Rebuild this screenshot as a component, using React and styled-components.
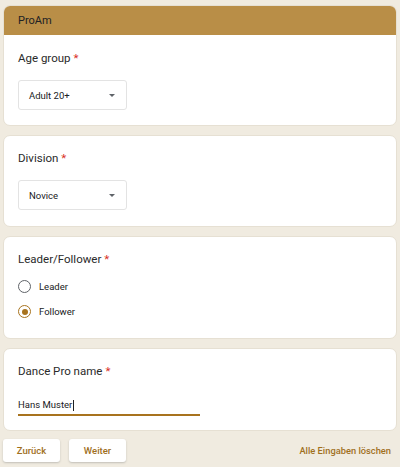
import React from "react";
import styled, { createGlobalStyle } from "styled-components";

const GlobalStyle = createGlobalStyle`
  html, body {
    margin: 0;
    padding: 0;
    background: #f0ebe0;
  }
  body {
    font-family: Roboto, "Liberation Sans", Arial, sans-serif;
    color: #202124;
  }
`;

const Page = styled.div`
  width: 400px;
  height: 467px;
  box-sizing: border-box;
  padding: 5px 3px 0 3px;
  display: flex;
  flex-direction: column;
  gap: 9px;
  overflow: hidden;
`;

const Card = styled.div`
  background: #fff;
  border-radius: 7px;
  border: 1px solid #e6e0d3;
  box-sizing: border-box;
  height: ${({ $h }) => $h}px;
  flex: none;
  overflow: hidden;
  display: flex;
  flex-direction: column;
`;

const Header = styled.div`
  background: #b98e47;
  height: 29px;
  flex: none;
  display: flex;
  align-items: center;
  padding-left: 14px;
  font-size: 11px;
  color: #202124;
`;

const Body = styled.div`
  padding: ${({ $top }) => $top}px 14px 0 14px;
  display: flex;
  flex-direction: column;
`;

const Label = styled.div`
  font-size: 11.5px;
  line-height: 14px;
  color: #2a2a2a;
  span {
    color: #d93025;
    margin-left: 3px;
  }
`;

const Select = styled.div`
  margin-top: 15px;
  width: 109px;
  height: 30px;
  box-sizing: border-box;
  border: 1px solid #e3e3e3;
  border-radius: 3px;
  display: flex;
  align-items: center;
  justify-content: space-between;
  padding: 0 11px 0 10px;
  font-size: 9.5px;
  color: #202124;
`;

const Arrow = styled.div`
  width: 0;
  height: 0;
  border-left: 3.5px solid transparent;
  border-right: 3.5px solid transparent;
  border-top: 3.5px solid #5f6368;
`;

const Options = styled.div`
  margin-top: 14px;
  display: flex;
  flex-direction: column;
  gap: 12px;
`;

const Option = styled.div`
  display: flex;
  align-items: center;
  gap: 8px;
  font-size: 9.5px;
  color: #202124;
  height: 13px;
`;

const Radio = styled.div`
  width: 13px;
  height: 13px;
  box-sizing: border-box;
  border-radius: 50%;
  border: 1.5px solid ${({ $on }) => ($on ? "#a8731e" : "#5f6368")};
  display: flex;
  align-items: center;
  justify-content: center;
  &::after {
    content: "";
    display: ${({ $on }) => ($on ? "block" : "none")};
    width: 6px;
    height: 6px;
    border-radius: 50%;
    background: #a8731e;
  }
`;

const Input = styled.div`
  margin-top: 21px;
  width: 182px;
  border-bottom: 2px solid #a8731e;
  font-size: 9.5px;
  line-height: 12px;
  padding-bottom: 3px;
  display: flex;
  align-items: center;
`;

const Caret = styled.span`
  display: inline-block;
  width: 1px;
  height: 11px;
  background: #202124;
  margin-left: 1px;
`;

const Footer = styled.div`
  display: flex;
  align-items: center;
  gap: 9px;
  margin-top: -1px;
`;

const Button = styled.div`
  width: 57px;
  height: 23px;
  background: #fff;
  border-radius: 3px;
  box-shadow: 0 1px 2px rgba(60, 64, 67, 0.25);
  display: flex;
  align-items: center;
  justify-content: center;
  font-size: 9.5px;
  font-weight: 500;
  color: #a0701e;
`;

const Clear = styled.div`
  margin-left: auto;
  margin-right: 6px;
  font-size: 9.3px;
  font-weight: 500;
  color: #a0701e;
`;

const Req = () => <span>*</span>;

export default function App() {
  return (
    <>
      <GlobalStyle />
      <Page>
        <Card $h={121}>
          <Header>ProAm</Header>
          <Body $top={16}>
            <Label>
              Age group<Req />
            </Label>
            <Select>
              Adult 20+
              <Arrow />
            </Select>
          </Body>
        </Card>
        <Card $h={92}>
          <Body $top={15}>
            <Label>
              Division<Req />
            </Label>
            <Select>
              Novice
              <Arrow />
            </Select>
          </Body>
        </Card>
        <Card $h={103}>
          <Body $top={15}>
            <Label>
              Leader/Follower<Req />
            </Label>
            <Options>
              <Option>
                <Radio />
                Leader
              </Option>
              <Option>
                <Radio $on />
                Follower
              </Option>
            </Options>
          </Body>
        </Card>
        <Card $h={83}>
          <Body $top={15}>
            <Label>
              Dance Pro name<Req />
            </Label>
            <Input>
              Hans Muster
              <Caret />
            </Input>
          </Body>
        </Card>
        <Footer>
          <Button>Zurück</Button>
          <Button>Weiter</Button>
          <Clear>Alle Eingaben löschen</Clear>
        </Footer>
      </Page>
    </>
  );
}
